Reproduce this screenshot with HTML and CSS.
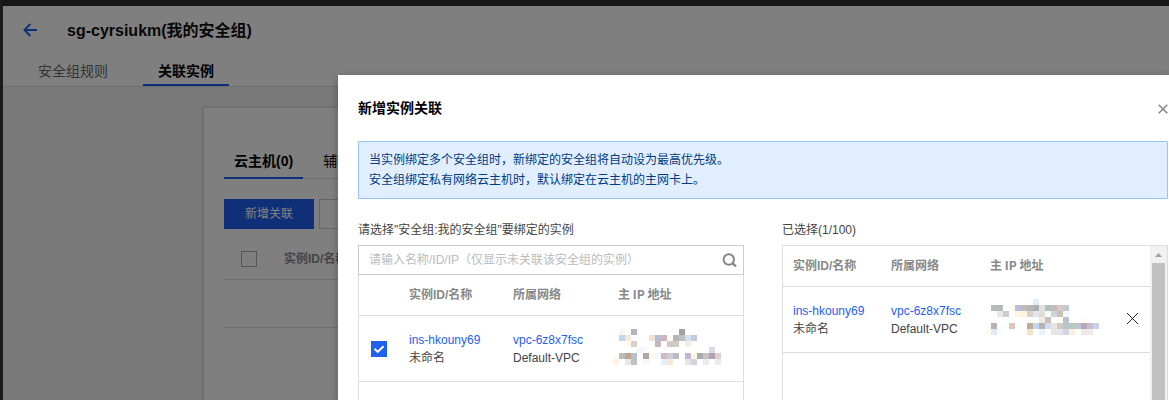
FILE: index.html
```html
<!DOCTYPE html>
<html lang="zh-CN">
<head>
<meta charset="utf-8">
<title>新增实例关联</title>
<link rel="stylesheet" href="styles.css">
</head>
<body>
<div class="page">
  <header class="header">
    <div class="title-row">
      <svg class="back" width="14" height="14" viewBox="0 0 14 14"><path d="M7.3 1 1.5 7l5.8 6M1.5 7H14" fill="none" stroke="#1f60f0" stroke-width="2"/></svg>
      <h1 class="title">sg-cyrsiukm(我的安全组)</h1>
    </div>
    <nav class="tabs">
      <a class="tab">安全组规则</a>
      <a class="tab tab-active">关联实例</a>
    </nav>
  </header>
  <main class="card">
    <nav class="card-tabs">
      <a class="card-tab card-tab-active">云主机(0)</a>
      <a class="card-tab">辅</a>
    </nav>
    <div class="actions">
      <button class="btn btn-primary">新增关联</button>
      <button class="btn btn-plain"></button>
    </div>
    <div class="bg-head"><span class="box"></span><span>实例ID/名称</span></div>
    <div class="bg-row"></div>
  </main>
</div>
<div class="mask"></div>
<section class="dialog">
  <div class="dialog-head">
    <h2 class="dialog-title">新增实例关联</h2>
    <svg class="close" width="10" height="10" viewBox="0 0 10 10"><path d="M.7.7l8.6 8.6M9.3.7.7 9.3" fill="none" stroke="#888" stroke-width="1.6"/></svg>
  </div>
  <div class="alert">
    <p>当实例绑定多个安全组时，新绑定的安全组将自动设为最高优先级。</p>
    <p>安全组绑定私有网络云主机时，默认绑定在云主机的主网卡上。</p>
  </div>
  <div class="transfer">
    <div class="pane">
      <div class="label">请选择"安全组:我的安全组"要绑定的实例</div>
      <div class="list source">
        <div class="search">
          <span>请输入名称/ID/IP（仅显示未关联该安全组的实例）</span>
          <svg width="15" height="15" viewBox="0 0 15 15"><circle cx="6.8" cy="6.5" r="5.2" fill="none" stroke="#888" stroke-width="2"/><path d="M10 9.8l4 3.6" stroke="#888" stroke-width="2.4"/></svg>
        </div>
        <div class="row row-head"><span></span><span>实例ID/名称</span><span>所属网络</span><span class="ip">主 IP 地址</span></div>
        <div class="row row-item">
          <span class="checked"><svg width="16" height="16" viewBox="0 0 16 16"><path d="M3.5 7.8l3.2 3.1 5.8-5.7" fill="none" stroke="#fff" stroke-width="2"/></svg></span>
          <div><a class="link">ins-hkouny69</a><br>未命名</div>
          <div><a class="link">vpc-6z8x7fsc</a><br>Default-VPC</div>
          <svg class="mosaic" width="108" height="36" viewBox="0 0 18 6" data-cells="1,0,fdf3eb 3,0,b5b5be 11,0,a1a19e 1,1,bfd8f0 2,1,f5e6d8 5,1,fffefa 6,1,f3e1cf 7,1,b6bdda 8,1,cdb6b5 10,1,b3b6b9 11,1,bdc1c2 12,1,cfe3f7 13,1,c8c9d2 2,2,fffbf1 3,2,d9d0ca 7,2,c6b7b6 9,2,d0ccc4 10,2,d0ccc2 12,2,f6ece3 4,3,f2f8ff 5,3,f7fbff 16,3,dcdbe5 1,4,bbbbbb 2,4,bba78c 3,4,b7bfcb 5,4,aea6a6 6,4,fef8f4 7,4,f2f8ff 8,4,cdbabd 9,4,c9cfd9 10,4,bbbcbd 12,4,beb7cf 13,4,fff5e3 14,4,a9abaf 15,4,c4c4c4 16,4,b0a3bb 17,4,dfd0cb 0,5,fdf1e3 2,5,e6e8e6 3,5,c0c0c0 5,5,f2f8ff 8,5,e5eff8 9,5,f7e7d5 12,5,e5e5e7 13,5,d0d5df 15,5,f0e8ee 17,5,ecebe8"></svg>
        </div>
      </div>
    </div>
    <div class="pane">
      <div class="label">已选择(1/100)</div>
      <div class="list target">
        <div class="target-body">
          <div class="row row-head"><span>实例ID/名称</span><span>所属网络</span><span class="ip">主 IP 地址</span></div>
          <div class="row row-item">
            <div><a class="link">ins-hkouny69</a><br>未命名</div>
            <div><a class="link">vpc-6z8x7fsc</a><br>Default-VPC</div>
            <svg class="mosaic" width="114" height="36" viewBox="0 0 19 6" data-cells="8,0,e4edf5 1,1,b5bbbb 2,1,b5bbbb 4,1,fffbf1 5,1,b7bfda 6,1,c2b9bf 7,1,b7b6b9 8,1,abadb0 9,1,e4e2de 10,1,aec2c2 11,1,c8bbbc 12,1,d6cac2 13,1,c4cad1 2,2,e8e8ea 3,2,c8ccd5 5,2,fff5e3 6,2,fdf3e3 7,2,d9d0cc 8,2,e6e6ea 9,2,dfdfda 10,2,fefbf6 11,2,cad4df 12,2,cdbfb2 13,2,f2f8ff 9,3,f2e8e4 10,3,c8bfbf 13,3,bfbfc8 16,3,fffdf0 1,4,b9b1b1 2,4,f8ffff 4,4,dfc5b9 5,4,f5fffd 7,4,c0af98 8,4,c0d9f2 9,4,b6b1b2 10,4,d0ddec 11,4,ece4dc 12,4,d0cac5 13,4,b7c5cf 14,4,b8c7c0 15,4,bbc6d5 16,4,b7a8bc 17,4,c9bccb 18,4,cad0e8 0,5,fffaf1 1,5,e4e9f5 2,5,f8ffff 7,5,f5e2cc 9,5,e8f2fc 11,5,e6e5ea 12,5,e6e5ea 13,5,d0d5df 14,5,fbf0df 16,5,f0e6ea 17,5,ecebe8"></svg>
            <svg class="remove" width="11" height="11" viewBox="0 0 11 11"><path d="M0 0l11 11M11 0L0 11" fill="none" stroke="#222" stroke-width="1"/></svg>
          </div>
        </div>
        <div class="scrollbar">
          <svg width="7" height="4" viewBox="0 0 7 4"><path d="M3.5 0 7 4H0z" fill="#a0a0a0"/></svg>
          <div class="thumb"></div>
        </div>
      </div>
    </div>
  </div>
</section>
<script src="mosaic.js"></script>
</body>
</html>
```

FILE: styles.css
```css
* { box-sizing: border-box; }
body {
  margin: 0;
  width: 1169px;
  height: 400px;
  position: relative;
  overflow: hidden;
  background: #303030;
  color: #444;
  font: 12px/18px "Liberation Sans", "Noto Sans CJK SC", sans-serif;
}
h1, h2, p { margin: 0; }
svg { display: block; flex: none; }
.page {
  height: 400px;
  border-top: 6px solid #2c2c2c;
  border-left: 3px solid #363636;
  background: #f2f2f2;
}
.header {
  height: 81px;
  background: #fff;
  border-bottom: 1px solid #dcdcdc;
}
.title-row {
  display: flex;
  align-items: center;
  height: 49px;
  padding-left: 20px;
  gap: 30px;
}
.back { margin-top: -1px; }
.title { font-size: 16px; line-height: 24px; color: #111; }
.tabs { display: flex; height: 31px; margin-left: 20px; }
.tab {
  padding: 0 15px;
  margin-right: 20px;
  font-size: 14px;
  line-height: 33px;
  color: #666;
}
.tab-active { color: #000; font-weight: 700; border-bottom: 2px solid #1f60f0; }
.card {
  height: 293px;
  margin: 20px 0 0 200px;
  padding: 37px 20px 0;
  background: #fff;
  border: 1px solid #dcdcdc;
  border-bottom: 0;
  box-shadow: 0 1px 3px rgba(0, 0, 0, .15);
}
.card-tabs { display: flex; height: 34px; box-shadow: inset 0 -1px #ddd; }
.card-tab {
  height: 34px;
  padding: 0 10px;
  margin-right: 10px;
  font-size: 14px;
  line-height: 32px;
  color: #000;
  white-space: nowrap;
}
.card-tab-active { font-weight: 700; border-bottom: 2px solid #1f60f0; }
.actions { display: flex; gap: 5px; margin-top: 20px; }
.btn { width: 90px; height: 30px; border: 0; padding: 0; font: inherit; }
.btn-primary { background: #1f60f0; color: #fff; }
.btn-plain { background: #fff; border: 1px solid #ccc; }
.bg-head {
  display: flex;
  align-items: center;
  gap: 27px;
  height: 51px;
  padding: 9px 17px 0;
  border-bottom: 1px solid #ddd;
  font-weight: 700;
  color: #888;
}
.box { width: 16px; height: 16px; border: 1px solid #aaa; }
.bg-row { height: 48px; border-bottom: 1px solid #ddd; }
.mask { position: absolute; inset: 0; background: rgba(0, 0, 0, .5); }
.dialog {
  position: absolute;
  left: 338px;
  top: 75px;
  width: 831px;
  height: 325px;
  padding: 20px 1px 0 20px;
  background: #fff;
  box-shadow: 0 2px 8px rgba(0, 0, 0, .28);
}
.dialog-head { display: flex; justify-content: space-between; align-items: center; height: 27px; }
.dialog-title { font-size: 14px; line-height: 20px; margin-top: -2px; color: #000; }
.alert {
  height: 58px;
  margin-top: 19px;
  padding: 8px 10px;
  line-height: 20px;
  color: #003b80;
  background: #e1eeff;
  border: 1px solid #97c3f6;
  border-radius: 1px;
}
.transfer { display: grid; grid-template-columns: 386px 386px; gap: 38px; margin-top: 21px; }
.label { height: 25px; line-height: 20px; white-space: nowrap; }
.list { height: 155px; border: 1px solid #ddd; border-bottom: 0; }
.search {
  display: flex;
  align-items: center;
  justify-content: space-between;
  height: 30px;
  margin: -1px -1px 0;
  padding: 0 6px 0 10px;
  border: 1px solid #ccc;
  color: #bbb;
}
.row { display: grid; border-bottom: 1px solid #ddd; align-items: center; }
.source .row { grid-template-columns: 50px 104px 100px 1fr; }
.target .row { grid-template-columns: 98px 94px 1fr 17px; padding-left: 10px; }
.row-head { height: 41px; font-weight: 700; color: #888; }
.row-item { height: 66px; }
.ip {
  margin: -2px 0 0 5px;
  font-family: "Noto Sans CJK SC", sans-serif;
}
.link { color: #1f60f0; }
.checked { width: 16px; height: 16px; margin-left: 12px; background: #1f60f0; }
.mosaic { shape-rendering: crispEdges; margin-top: -3px; }
.target { display: flex; }
.target-body { flex: 1; }
.target .row-item { grid-template-columns: 98px 94px 1fr 23px; }
.target .mosaic { margin-top: -5px; }
.remove { margin-top: -3px; }
.scrollbar { width: 17px; background: #f1f1f1; padding-top: 7px; }
.scrollbar svg { margin-left: 5px; }
.thumb { width: 13px; height: 137px; margin: 6px 0 0 2px; background: #c1c1c1; }
```

FILE: mosaic.js
```js
// Fills each pixelated block from its "column,row,colour" list.
document.querySelectorAll('.mosaic').forEach(function (svg) {
  svg.dataset.cells.split(' ').forEach(function (cell) {
    var p = cell.split(',');
    var r = document.createElementNS('http://www.w3.org/2000/svg', 'rect');
    r.setAttribute('x', p[0]);
    r.setAttribute('y', p[1]);
    r.setAttribute('width', 1);
    r.setAttribute('height', 1);
    r.setAttribute('fill', '#' + p[2]);
    svg.appendChild(r);
  });
});
```
